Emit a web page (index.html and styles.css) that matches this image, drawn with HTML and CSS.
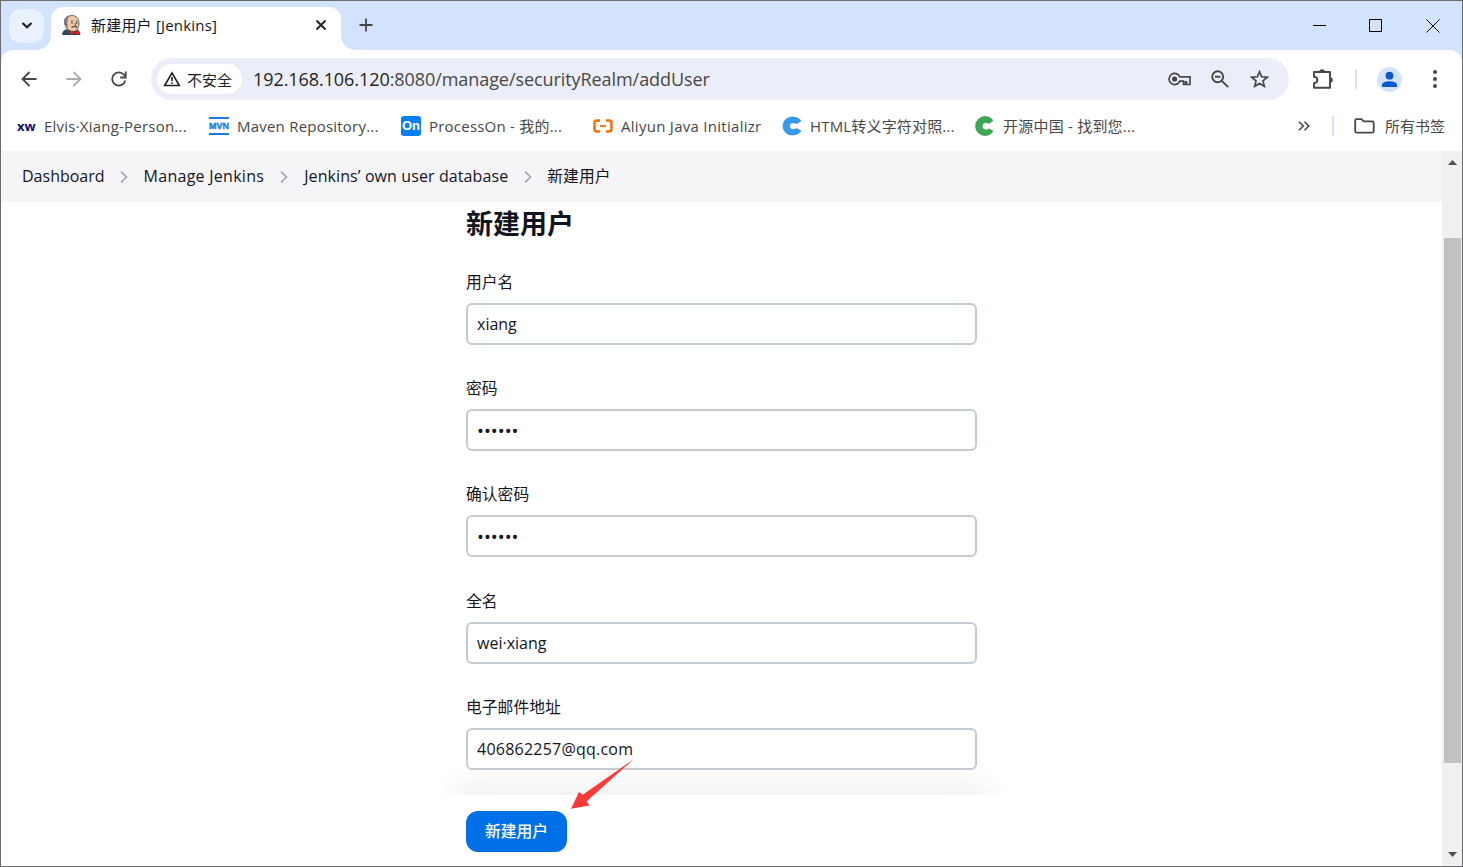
FILE: index.html
```
<!DOCTYPE html>
<html lang="zh-CN">
<head>
  <meta charset="utf-8">
  <title>新建用户 [Jenkins]</title>
  <link rel="stylesheet" href="styles.css">
</head>
<body>
  <div class="window">
    <!-- Tab strip -->
    <div class="tab-strip">
      <button class="tab-search">
        <svg width="12" height="8" viewBox="0 0 12 8"><path d="M1.500 1L6 5.300 10.500 1" fill="none" stroke="#1f1f1f" stroke-width="2.200"/></svg>
      </button>
      <div class="tab">
        <svg class="tab-icon" width="20" height="20" viewBox="0 0 20 20">
          <path d="M.5 20c0-3.500 1.500-5 5-5.500h8c3.500.5 4.500 2.500 4.500 5.500z" fill="#2e4a5c" stroke="#233" stroke-width=".6"/>
          <path d="M2.500 6.500C2.500 2.500 6 .5 10 .5s7 3 7 7.500c0 5-2 8.500-6 8.500-5 0-7-4-8-7z" fill="#e8c9a8" stroke="#39332f" stroke-width=".7"/>
          <path d="M2.500 10C1 5 3.500 1 8.500.6 6 2.200 5.500 4 5.500 6.500L4.500 10z" fill="#7d7f80"/>
          <path d="M3 9c1.500-1 2.500 1 2 3.500M8.800 6.300l2.200-.4M13.500 5.900l2 .4M13 8l.8 2.500-1.500.5" fill="none" stroke="#4a382e" stroke-width=".8"/>
          <path d="M9.500 12.500c2-1.200 4-1.200 6 0" fill="none" stroke="#6d635b" stroke-width="1.500"/>
          <circle cx="10" cy="8" r=".7" fill="#222"/><circle cx="14.700" cy="8" r=".7" fill="#222"/>
          <path d="M8.500 15.500l4 2-4 2.300zM17 15.500l-4.500 2 4.500 2.300z" fill="#e3272b"/><circle cx="12.500" cy="17.600" r="1.300" fill="#ba171c"/>
        </svg>
        <span class="tab-title">新建用户 [Jenkins]</span>
        <svg width="12" height="12" viewBox="0 0 12 12"><path d="M1.500 1.500l9 9M10.500 1.500l-9 9" stroke="#1f1f1f" stroke-width="1.900"/></svg>
      </div>
      <svg class="new-tab" width="14" height="14" viewBox="0 0 14 14"><path d="M7 .5v13M.5 7h13" stroke="#444746" stroke-width="1.800"/></svg>
      <div class="window-buttons">
        <svg width="13" height="13" viewBox="0 0 13 13"><path d="M0 6.500h13" stroke="#000"/></svg>
        <svg width="13" height="13" viewBox="0 0 13 13"><path d="M.5.5h12v12H.5z" fill="none" stroke="#000"/></svg>
        <svg width="14" height="14" viewBox="0 0 14 14"><path d="M.5.500l13 13M13.500.500l-13 13" stroke="#000"/></svg>
      </div>
    </div>

    <!-- Address bar -->
    <div class="toolbar">
      <div class="nav-buttons">
        <svg width="16" height="16" viewBox="0 0 16 16"><path d="M15.500 8H1.500M8.500 1L1.500 8l7 7" fill="none" stroke="#474747" stroke-width="1.800"/></svg>
        <svg width="16" height="16" viewBox="0 0 16 16"><path d="M.5 8h14M7.500 1l7 7-7 7" fill="none" stroke="#ababab" stroke-width="1.800"/></svg>
        <svg width="16" height="16" viewBox="0 0 16 16"><path d="M14.300 9.500A6.600 6.600 0 1 1 12.900 3.600L14.500 5.500" fill="none" stroke="#474747" stroke-width="1.800"/><path d="M14.700.500v6H9.200" fill="none" stroke="#474747" stroke-width="1.800"/></svg>
      </div>
      <div class="omnibox">
        <div class="security">
          <svg width="18" height="16" viewBox="0 0 18 16"><path d="M9 1.800L16.300 14.500H1.700z" fill="none" stroke="#1f1f1f" stroke-width="1.600"/><path d="M9 6v4M9 11.200v1.600" stroke="#1f1f1f" stroke-width="1.600"/></svg>
          <span>不安全</span>
        </div>
        <div class="url"><b>192.168.106.120</b>:8080/manage/securityRealm/addUser</div>
        <svg class="key-icon" width="23" height="14" viewBox="0 0 23 14"><path d="M11.800 4.800A5.600 5.600 0 1 0 11.800 9.200H15.500V12.500H17.500V9.800H18.500V12.500H22V4.800z" fill="none" stroke="#474747" stroke-width="1.700"/><circle cx="6.600" cy="7" r="2.600" fill="#474747"/></svg>
        <svg class="zoom-icon" width="18" height="18" viewBox="0 0 18 18"><circle cx="6.700" cy="6.700" r="5.500" fill="none" stroke="#474747" stroke-width="1.900"/><path d="M4 6.700h5.400M10.800 10.800l6.400 6.400" stroke="#474747" stroke-width="1.900"/></svg>
        <svg class="star-icon" width="19" height="18" viewBox="0 0 19 18"><path d="M9.500 1.800l2.200 5 5.500.5-4.200 3.600 1.300 5.400-4.800-2.900-4.800 2.900L6 10.900 1.800 7.300l5.500-.5z" fill="none" stroke="#474747" stroke-width="1.700"/></svg>
      </div>
      <svg class="ext-icon" width="22" height="21" viewBox="0 0 22 21"><path d="M2 3h16v15.700H2v-4.600c4.500-.7 4.500-5.700 0-6.400z" fill="none" stroke="#474747" stroke-width="1.900" stroke-linejoin="round"/><path d="M7.200 3a2.800 2.800 0 0 1 5.600 0zM18 8.200a2.800 2.800 0 0 1 0 5.600z" fill="#474747"/></svg>
      <span class="divider"></span>
      <svg class="avatar" width="25" height="25" viewBox="0 0 25 25"><circle cx="12.500" cy="12.500" r="12.500" fill="#d3e3fd"/><circle cx="12.500" cy="8.700" r="3.900" fill="#0b57d0"/><path d="M5 20v-2c0-5 15-5 15 0v2z" fill="#0b57d0"/></svg>
      <svg class="menu-icon" width="4" height="18" viewBox="0 0 4 18"><circle cx="2" cy="2" r="2" fill="#474747"/><circle cx="2" cy="9" r="2" fill="#474747"/><circle cx="2" cy="16" r="2" fill="#474747"/></svg>
    </div>

    <!-- Bookmarks -->
    <div class="bookmarks">
      <div class="bookmark"><span class="fav fav-xw">xw</span><span class="name">Elvis·Xiang-Person...</span></div>
      <div class="bookmark"><span class="fav fav-mvn">MVN</span><span class="name">Maven Repository...</span></div>
      <div class="bookmark"><span class="fav fav-on">On</span><span class="name">ProcessOn - 我的...</span></div>
      <div class="bookmark">
        <svg class="fav" width="20" height="14" viewBox="0 0 20 14"><path d="M7 1.500H4Q1.500 1.500 1.500 4v6q0 2.500 2.500 2.500h3M13 1.500h3q2.500 0 2.500 2.500v6q0 2.500-2.500 2.500h-3" fill="none" stroke="#ff6a00" stroke-width="2.400"/><path d="M7 7h6" stroke="#ff6a00" stroke-width="1.800"/></svg>
        <span class="name name-aliyun">Aliyun Java Initializr</span>
      </div>
      <div class="bookmark">
        <svg class="fav" width="20" height="20" viewBox="0 0 21 20"><path d="M20 4.500Q17 .5 10.500.5a9.500 9.500 0 0 0 0 19q6.500 0 9.500-4.200l-4.700-2.600q-1.500 1-4 1a3.600 3.600 0 0 1 0-7.200q2.500 0 4 1z" fill="#359af2" stroke="#287fc7" stroke-width=".7"/></svg>
        <span class="name name-cjk">HTML转义字符对照...</span>
      </div>
      <div class="bookmark">
        <svg class="fav" width="20" height="20" viewBox="0 0 19 20"><path d="M17.500 4.500Q15 .5 9.500.5a9.300 9.300 0 0 0 0 19q5.500 0 8-4.500l-4-2.200q-1.300 1.200-3 1.200a3.800 3.800 0 0 1 0-7.600q1.700 0 3 1.200z" fill="#3aaa53" stroke="#2d8b43" stroke-width=".6"/></svg>
        <span class="name">开源中国 - 找到您...</span>
      </div>
      <div class="bookmarks-end">
        <svg class="more" width="12" height="10" viewBox="0 0 12 10"><path d="M1 .7L5.300 5 1 9.300M6.500.7L10.800 5 6.500 9.300" fill="none" stroke="#474747" stroke-width="1.600"/></svg>
        <span class="divider"></span>
        <svg width="21" height="16" viewBox="0 0 21 16"><path d="M1.200 2.500Q1.200 1.200 2.500 1.200h5l2.200 2.200h8.500q1.500 0 1.500 1.400v8.400q0 1.400-1.500 1.400H2.600q-1.400 0-1.400-1.400z" fill="none" stroke="#474747" stroke-width="1.800"/></svg>
        <span class="all-bookmarks">所有书签</span>
      </div>
    </div>

    <!-- Page -->
    <div class="viewport">
      <div class="page">
        <nav class="breadcrumbs">
          <span>Dashboard</span>
          <svg width="8" height="12" viewBox="0 0 8 12"><path d="M1 .7L6.500 6 1 11.300" fill="none" stroke="#a4a3b5" stroke-width="1.600"/></svg>
          <span class="crumb-manage">Manage Jenkins</span>
          <svg width="8" height="12" viewBox="0 0 8 12"><path d="M1 .7L6.500 6 1 11.300" fill="none" stroke="#a4a3b5" stroke-width="1.600"/></svg>
          <span class="crumb-realm">Jenkins’ own user database</span>
          <svg width="8" height="12" viewBox="0 0 8 12"><path d="M1 .7L6.500 6 1 11.300" fill="none" stroke="#a4a3b5" stroke-width="1.600"/></svg>
          <span class="crumb-current">新建用户</span>
        </nav>
        <main class="main">
          <h1>新建用户</h1>
          <form id="userForm">
            <label for="username">用户名</label>
            <input type="text" id="username" value="xiang">
            <label for="password1">密码</label>
            <input type="password" id="password1" value="123456">
            <label for="password2">确认密码</label>
            <input type="password" id="password2" value="123456">
            <label for="fullname">全名</label>
            <input type="text" id="fullname" value="wei·xiang">
            <label for="email">电子邮件地址</label>
            <input type="text" id="email" class="email" value="406862257@qq.com">
          </form>
        </main>
        <div class="bottom-bar">
          <button type="submit" form="userForm" class="submit-button">新建用户</button>
          <!-- Arrow pointing at the button -->
          <svg class="arrow" width="64" height="52" viewBox="0 0 64 52"><path d="M63.200.800L15.700 43.200l2.800 4.300L0 50.800 8 34l3.800 2.800z" fill="#fa3a38"/></svg>
        </div>
      </div>
      <div class="scrollbar">
        <svg width="9" height="5" viewBox="0 0 9 5"><path d="M0 5L4.500 0 9 5z" fill="#505050"/></svg>
        <div class="thumb"></div>
        <svg class="down" width="9" height="5" viewBox="0 0 9 5"><path d="M0 0h9L4.500 5z" fill="#505050"/></svg>
      </div>
    </div>
  </div>
</body>
</html>
```
FILE: styles.css
```
* {
  box-sizing: border-box;
}

body {
  margin: 0;
  font-family: "Open Sans", "Noto Sans CJK SC", sans-serif;
  font-size: 15px;
  color: #14141f;
}

svg {
  display: block;
  flex-shrink: 0;
}

button {
  border: none;
  padding: 0;
  font-family: inherit;
}

.window {
  width: 1463px;
  height: 867px;
  border: 1px solid #6b6b70;
  display: flex;
  flex-direction: column;
  background-color: #d3e2fd;
  overflow: hidden;
}

/* Tab strip */
.tab-strip {
  height: 49px;
  display: flex;
  align-items: center;
  padding-left: 8px;
}

.tab-search {
  width: 35px;
  height: 34px;
  border-radius: 12px;
  background-color: #eaf1fe;
  display: flex;
  align-items: center;
  justify-content: center;
}

.tab {
  position: relative;
  align-self: flex-end;
  width: 290px;
  height: 43px;
  margin-left: 7px;
  padding: 0 14px 7px 11px;
  border-radius: 12px 12px 0 0;
  background-color: #fff;
  display: flex;
  align-items: center;
}

/* Curved feet of the active tab */
.tab::before,
.tab::after {
  content: "";
  position: absolute;
  bottom: 0;
  width: 14px;
  height: 14px;
}

.tab::before {
  left: -14px;
  background: radial-gradient(circle at 0 0, transparent 13.5px, #fff 14px);
}

.tab::after {
  right: -14px;
  background: radial-gradient(circle at 100% 0, transparent 13.5px, #fff 14px);
}

.tab-title {
  flex: 1;
  margin-left: 9px;
  padding-bottom: 2px;
  font-size: 15px;
  letter-spacing: 0.2px;
  white-space: nowrap;
}

.new-tab {
  margin-left: 18px;
  margin-bottom: 1px;
}

.window-buttons {
  display: flex;
  align-items: center;
  gap: 43px;
  margin-left: auto;
  padding-right: 22px;
}

.window-buttons svg:last-child {
  margin-left: 1px;
}

/* Address bar */
.toolbar {
  height: 58px;
  padding: 0 25px 0 20px;
  border-radius: 12px 12px 0 0;
  background-color: #fff;
  display: flex;
  align-items: center;
}

.nav-buttons {
  display: flex;
  gap: 29px;
}

.omnibox {
  width: 1138px;
  height: 42px;
  margin-left: 24px;
  padding: 0 20px 0 6px;
  border-radius: 21px;
  background-color: #ebeef8;
  display: flex;
  align-items: center;
}

.security {
  width: 85px;
  height: 30px;
  border-radius: 15px;
  background-color: #fff;
  display: flex;
  align-items: center;
  gap: 6px;
  padding-left: 6px;
  color: #1f1f1f;
}

.url {
  flex: 1;
  margin-left: 11px;
  font-size: 18px;
  letter-spacing: -0.07px;
  color: #474747;
  white-space: nowrap;
}

.url b {
  font-weight: normal;
  color: #1f1f1f;
}

.zoom-icon {
  margin-left: 20px;
}

.star-icon {
  margin-left: 21px;
}

.ext-icon {
  margin-left: 23px;
}

.divider {
  width: 2px;
  height: 20px;
  background-color: #d3e3fd;
}

.toolbar .divider {
  margin-left: 21px;
}

.avatar {
  margin-left: 20px;
}

.menu-icon {
  margin-left: auto;
}

/* Bookmarks */
.bookmarks {
  height: 43px;
  padding: 0 17px 7px 16px;
  background-color: #fff;
  display: flex;
  align-items: center;
  color: #474747;
}

.bookmark {
  width: 192px;
  display: flex;
  align-items: center;
  white-space: nowrap;
}

.bookmark:nth-child(4) {
  width: 189px;
}

.bookmark:nth-child(5) {
  width: 193px;
}

.name {
  letter-spacing: 0.22px;
  padding-bottom: 1px;
}

.name-aliyun {
  letter-spacing: 0.28px;
}

.name-cjk {
  letter-spacing: 0.17px;
}

.all-bookmarks {
  padding-bottom: 2px;
}

.fav {
  width: 20px;
  flex-shrink: 0;
  margin-right: 8px;
  text-align: center;
}

.fav-xw {
  width: 18px;
  margin-right: 9px;
  font: bold 13px/18px "Open Sans", sans-serif;
  color: #0b0b70;
}

.fav-mvn {
  height: 18px;
  border-top: 2px solid #1b7be0;
  border-bottom: 2px solid #1b7be0;
  font: bold 9px/14px "Liberation Sans", sans-serif;
  color: #1b7be0;
  -webkit-text-stroke: 0.4px #1b7be0;
}

.fav-on {
  height: 20px;
  border-radius: 3px;
  background-color: #0880f4;
  font: bold 13px/20px "Liberation Sans", sans-serif;
  color: #fff;
}

.bookmarks-end {
  margin-left: auto;
  display: flex;
  align-items: center;
  gap: 10px;
  white-space: nowrap;
}

.bookmarks-end .divider {
  margin: 0 10px 0 12px;
}

/* Page */
.viewport {
  flex: 1;
  display: flex;
  min-height: 0;
}

.page {
  width: 1441px;
  display: flex;
  flex-direction: column;
  background-color: #fff;
}

.breadcrumbs {
  height: 51px;
  padding-left: 21px;
  background-color: #f5f5f8;
  display: flex;
  align-items: center;
  gap: 16px;
  font-size: 16px;
}

.breadcrumbs span {
  padding-bottom: 2px;
}

.breadcrumbs span:first-child {
  margin-right: -1px;
}

.crumb-manage {
  letter-spacing: 0.27px;
}

.crumb-realm {
  letter-spacing: 0.1px;
}

.breadcrumbs .crumb-current {
  margin-left: -1px;
  padding-bottom: 3px;
  font-size: 15.8px;
}

.main {
  position: relative;
  height: 593px;
  padding-left: 465px;
  overflow: hidden;
}

/* Shadow cast upwards by the bottom bar */
.main::after {
  content: "";
  position: absolute;
  left: 465px;
  bottom: -20px;
  width: 511px;
  height: 20px;
  box-shadow: 0 0 32px 10px rgba(0, 0, 0, 0.065);
}

h1 {
  margin: 0;
  height: 69px;
  font-size: 27px;
  line-height: 43px;
}

form {
  width: 511px;
  position: relative;
  z-index: 1;
}

label {
  display: block;
  height: 32px;
  line-height: 22px;
  font-size: 15.8px;
}

input {
  display: block;
  width: 511px;
  height: 42px;
  margin-bottom: 32.2px;
  padding: 0 9px;
  border: 2px solid #c3ccd1;
  border-radius: 6px;
  background-color: #fff;
  font-family: inherit;
  font-size: 16px;
  color: #14141f;
}

input[type="password"] {
  font-size: 18.4px;
}

.email {
  letter-spacing: 0.23px;
}

.bottom-bar {
  position: relative;
  z-index: 2;
  flex: 1;
  padding: 16px 0 0 465px;
}

.submit-button {
  width: 101px;
  height: 41px;
  padding-bottom: 3px;
  border-radius: 12px;
  background-color: #0070e8;
  color: #fff;
  font-size: 15.8px;
  font-weight: 500;
}

.arrow {
  position: absolute;
  left: 570px;
  top: -37px;
}

.scrollbar {
  width: 20px;
  padding: 9px 1px 9px 2px;
  background-color: #f0f0f0;
  display: flex;
  flex-direction: column;
  align-items: center;
}

.thumb {
  width: 17px;
  height: 525px;
  margin-top: 73px;
  background-color: #c1c1c1;
}

.down {
  margin-top: auto;
}
```
